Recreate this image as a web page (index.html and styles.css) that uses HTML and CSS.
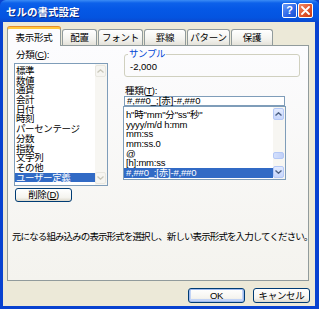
FILE: index.html
```html
<!DOCTYPE html>
<html lang="ja">
<head>
<meta charset="utf-8">
<title>セルの書式設定</title>
<link rel="stylesheet" href="styles.css">
</head>
<body>
<div class="window">
  <div class="titlebar">
    <span class="title">セルの書式設定</span>
    <div class="tb-buttons">
      <span class="tb-btn help">?</span>
      <span class="tb-btn close"><svg width="9" height="9" viewBox="0 0 9 9"><path d="M1 1L8 8M8 1L1 8" stroke="#fff" stroke-width="1.8" stroke-linecap="round"/></svg></span>
    </div>
  </div>
  <div class="frame">
    <div class="client">
      <div class="tabs">
        <div class="tab active w1">表示形式</div>
        <div class="tab w2">配置</div>
        <div class="tab w3">フォント</div>
        <div class="tab w4">罫線</div>
        <div class="tab w5">パターン</div>
        <div class="tab w6">保護</div>
      </div>
      <div class="panel">
        <div class="cols">
          <div class="left">
            <div class="label">分類(<u>C</u>):</div>
            <div class="listbox cat">
              <ul class="items">
                <li>標準</li>
                <li>数値</li>
                <li>通貨</li>
                <li>会計</li>
                <li>日付</li>
                <li>時刻</li>
                <li>パーセンテージ</li>
                <li>分数</li>
                <li>指数</li>
                <li>文字列</li>
                <li>その他</li>
                <li class="sel">ユーザー定義</li>
              </ul>
              <div class="scrollbar disabled">
                <span class="sb-btn"><svg width="7" height="4" viewBox="0 0 7 4"><path d="M0.5 3.5L3.5 0.8L6.5 3.5" fill="none" stroke="currentColor" stroke-width="1.3"/></svg></span>
                <span class="sb-track"></span>
                <span class="sb-btn"><svg width="7" height="4" viewBox="0 0 7 4"><path d="M0.5 0.5L3.5 3.2L6.5 0.5" fill="none" stroke="currentColor" stroke-width="1.3"/></svg></span>
              </div>
            </div>
            <button class="btn del">削除(<u>D</u>)</button>
          </div>
          <div class="right">
            <fieldset class="sample">
              <legend>サンプル</legend>
              <div class="sample-val">-2,000</div>
            </fieldset>
            <div class="label">種類(<u>T</u>):</div>
            <div class="input">#,##0_;[赤]-#,##0</div>
            <div class="listbox fmt">
              <ul class="items">
                <li>h"時"mm"分"ss"秒"</li>
                <li>yyyy/m/d h:mm</li>
                <li>mm:ss</li>
                <li>mm:ss.0</li>
                <li>@</li>
                <li>[h]:mm:ss</li>
                <li class="sel">#,##0_;[赤]-#,##0</li>
              </ul>
              <div class="scrollbar">
                <span class="sb-btn"><svg width="7" height="4" viewBox="0 0 7 4"><path d="M0.5 3.5L3.5 0.8L6.5 3.5" fill="none" stroke="currentColor" stroke-width="1.4"/></svg></span>
                <span class="sb-track"><span class="sb-thumb"></span></span>
                <span class="sb-btn"><svg width="7" height="4" viewBox="0 0 7 4"><path d="M0.5 0.5L3.5 3.2L6.5 0.5" fill="none" stroke="currentColor" stroke-width="1.4"/></svg></span>
              </div>
            </div>
          </div>
        </div>
        <p class="desc">元になる組み込みの表示形式を選択し、新しい表示形式を入力してください。</p>
      </div>
      <div class="footer">
        <button class="btn ok">OK</button>
        <button class="btn">キャンセル</button>
      </div>
    </div>
  </div>
</div>
</body>
</html>
```
FILE: styles.css
```css
* { box-sizing: border-box; }
html, body { margin: 0; padding: 0; background: #fff; }
body {
  font-family: "Liberation Sans", "Noto Sans CJK JP", sans-serif;
  font-size: 9.5px;
  color: #000;
}
.window {
  width: 319px;
  height: 309px;
  display: flex;
  flex-direction: column;
  background: #0842d0;
  overflow: hidden;
}
.titlebar {
  height: 22px;
  flex: none;
  display: flex;
  align-items: flex-start;
  justify-content: space-between;
  background: linear-gradient(#3b8cf5 0, #0d61ea 3px, #0558e6 40%, #0454e0 80%, #0a48cf 100%);
  border-radius: 6px 6px 0 0;
}
.title {
  font-family: "Noto Sans CJK JP", sans-serif;
  font-weight: bold;
  font-size: 10.5px;
  line-height: 12px;
  color: #fff;
  margin: 6px 0 0 6px;
  text-shadow: 1px 1px 0 #0a2a8a;
}
.tb-buttons {
  display: flex;
  gap: 1px;
  margin: 3px 6px 0 0;
}
.tb-btn {
  width: 15px;
  height: 15px;
  border: 1px solid #fff;
  border-radius: 2px;
  display: flex;
  align-items: center;
  justify-content: center;
  color: #fff;
  font-weight: bold;
  font-size: 11px;
  line-height: 1;
}
.help { background: linear-gradient(135deg, #6b9cf7, #2a64e8 60%, #1a4fd0); }
.close { background: linear-gradient(135deg, #f08d6a, #e2552c 55%, #c93a10); }
.frame {
  flex: 1;
  display: flex;
  padding: 0 4px 3px 3px;
}
.client {
  flex: 1;
  background: #ece9d8;
  padding: 5px 0 0 4px;
  display: flex;
  flex-direction: column;
}
.tabs {
  display: flex;
  align-items: flex-end;
  height: 18px;
  gap: 1px;
  position: relative;
  z-index: 1;
}
.tab {
  height: 16px;
  border: 1px solid #919b9c;
  border-bottom: none;
  border-radius: 3px 3px 0 0;
  background: linear-gradient(#ffffff, #f3f3ef 60%, #e4e2da);
  display: flex;
  align-items: center;
  justify-content: center;
  font-size: 9.5px;
  line-height: 10px;
  letter-spacing: -0.3px;
}
.tab.active {
  height: 19px;
  margin-bottom: -1px;
  background: #fcfcfe;
  border-top: 2px solid #ffc83c;
  box-shadow: 0 -1px 0 #e68b2c;
}
.w1 { width: 54px; }
.w2 { width: 35px; }
.w3 { width: 45px; }
.w4 { width: 42px; }
.w5 { width: 43px; }
.w6 { width: 42px; }
.panel {
  width: 302px;
  height: 236px;
  border: 1px solid #919b9c;
  background: linear-gradient(#fcfcfe, #f4f3ee);
  display: flex;
  flex-direction: column;
}
.cols {
  display: flex;
  gap: 16px;
}
.left {
  width: 94px;
  margin-left: 6px;
  display: flex;
  flex-direction: column;
  align-items: flex-start;
}
.label {
  line-height: 10px;
  height: 10px;
  letter-spacing: -0.3px;
}
.left .label { margin: 4px 0 3px 2px; }
.listbox {
  border: 1px solid #7f9db9;
  background: #fff;
  display: flex;
}
.items {
  list-style: none;
  margin: 0;
  padding: 0;
  flex: 1;
}
.items li {
  height: 9.7px;
  line-height: 9.7px;
  white-space: nowrap;
  padding-left: 1px;
  letter-spacing: -0.4px;
}
.items li.sel { background: #316ac5; color: #fff; }
.cat { width: 94px; height: 123px; }
.cat .items { padding-top: 2px; }
.scrollbar {
  width: 12px;
  display: flex;
  flex-direction: column;
  background: #f7f6f2;
  padding: 1px 1px 1px 0;
}
.sb-btn {
  height: 12px;
  flex: none;
  border: 1px solid #b4c8f6;
  border-radius: 2px;
  background: linear-gradient(#e3ebff, #c6d5fb);
  color: #4d6185;
  display: flex;
  align-items: center;
  justify-content: center;
}
.scrollbar.disabled .sb-btn {
  border-color: #e8e7e0;
  background: #f6f5f1;
  color: #c9c7ba;
}
.sb-track {
  flex: 1;
  display: flex;
  flex-direction: column;
  justify-content: flex-end;
}
.sb-thumb {
  height: 7px;
  margin-bottom: 7px;
  border: 1px solid #b4c8f6;
  border-radius: 2px;
  background: linear-gradient(90deg, #d4e0fc, #c0d0f8);
}
.btn {
  font-family: "Liberation Sans", "Noto Sans CJK JP", sans-serif;
  font-size: 9.5px;
  line-height: 10px;
  height: 15px;
  width: 57px;
  padding: 0;
  border: 1px solid #003c74;
  border-radius: 3px;
  background: linear-gradient(#ffffff, #f5f4ef 70%, #dcd8cc);
  color: #000;
  letter-spacing: -0.3px;
}
.del { margin: 2px 0 0 1px; height: 14px; }
.right {
  width: 176px;
  display: flex;
  flex-direction: column;
}
.sample {
  margin: 3px 0 0 0;
  padding: 0 0 3px 5px;
  border: 1px solid #d0d0bf;
  border-radius: 3px;
  height: 28px;
  min-width: 0;
}
.sample legend {
  padding: 0 1px;
  margin-left: -2px;
  color: #0046d5;
  line-height: 10px;
  letter-spacing: -0.4px;
}
.sample-val {
  line-height: 10px;
  margin-top: 3px;
}
.right .label { margin-top: 9px; margin-left: 1px; }
.input {
  width: 161px;
  height: 10px;
  border: 1px solid #7f9db9;
  background: #fff;
  line-height: 8px;
  padding-left: 2px;
  white-space: nowrap;
}
.fmt { width: 163px; height: 74px; margin-left: -1px; }
.fmt .items { padding-top: 3px; }
.fmt .items li { padding-left: 2px; letter-spacing: -0.2px; }
.desc {
  margin: 30px 0 0 4px;
  line-height: 10px;
  letter-spacing: -0.9px;
  white-space: nowrap;
}
.footer {
  display: flex;
  justify-content: flex-end;
  gap: 8px;
  margin-top: 7px;
  padding-right: 5px;
}
.ok { box-shadow: inset 0 0 0 1px #9fbbef, inset 0 -1px 0 2px #c3d4f6; }
```
